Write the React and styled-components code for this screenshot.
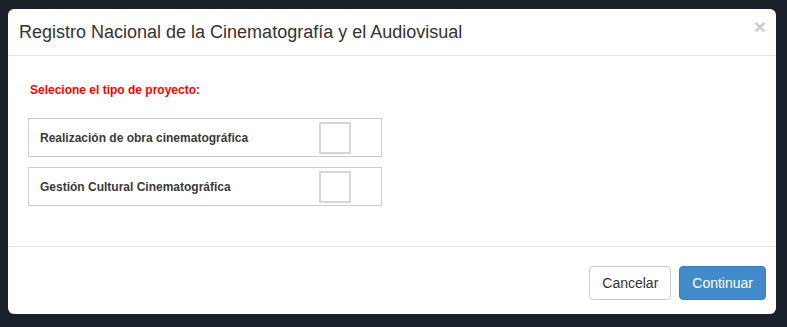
import React from "react";
import styled, { createGlobalStyle } from "styled-components";

const Global = createGlobalStyle`
  html, body { margin: 0; padding: 0; }
  body {
    background: #1a212b;
    font-family: "Liberation Sans", Arial, sans-serif;
    color: #333;
    width: 787px;
    height: 327px;
    overflow: hidden;
  }
`;

const Page = styled.div`
  padding: 9px 11px 0 8px;
`;

const Modal = styled.div`
  width: 768px;
  height: 305px;
  background: #fff;
  border-radius: 6px;
  display: flex;
  flex-direction: column;
  overflow: hidden;
`;

const Header = styled.div`
  display: flex;
  align-items: flex-start;
  justify-content: space-between;
  padding: 10px 10px 10px 11px;
  border-bottom: 1px solid #e5e5e5;
`;

const Title = styled.h4`
  margin: 0;
  font-size: 18px;
  font-weight: normal;
  line-height: 26px;
  color: #333;
`;

const Close = styled.button`
  border: 0;
  background: transparent;
  padding: 0;
  margin: 0;
  font-family: "Liberation Sans", Arial, sans-serif;
  font-size: 21px;
  font-weight: bold;
  line-height: 16px;
  color: #000;
  opacity: 0.2;
  cursor: pointer;
`;

const Body = styled.div`
  flex: 1;
  padding: 27px 20px 0 20px;
`;

const Prompt = styled.p`
  margin: 0 0 20px 2px;
  font-size: 12px;
  font-weight: bold;
  line-height: 15px;
  color: #ff0000;
`;

const Options = styled.div`
  display: flex;
  flex-direction: column;
  gap: 10px;
`;

const Option = styled.label`
  box-sizing: border-box;
  width: 354px;
  height: 39px;
  border: 1px solid #ccc;
  display: flex;
  align-items: center;
  justify-content: space-between;
  padding: 0 30px 0 11px;
  cursor: pointer;
`;

const OptionText = styled.span`
  font-size: 12px;
  font-weight: bold;
  color: #3a3a3a;
`;

const Check = styled.span`
  box-sizing: border-box;
  width: 32px;
  height: 32px;
  border: 2px solid #d3d7dc;
  background: #fff;
  margin-top: 1px;
`;

const Footer = styled.div`
  display: flex;
  justify-content: flex-end;
  gap: 8px;
  padding: 19px 10px 14px;
  border-top: 1px solid #e5e5e5;
`;

const Button = styled.button`
  box-sizing: border-box;
  height: 34px;
  padding: 6px 12px;
  font-family: "Liberation Sans", Arial, sans-serif;
  font-size: 14px;
  line-height: 20px;
  border-radius: 4px;
  border: 1px solid ${(p) => (p.$primary ? "#3a80bd" : "#ccc")};
  background: ${(p) => (p.$primary ? "#428bca" : "#fff")};
  color: ${(p) => (p.$primary ? "#fff" : "#333")};
  cursor: pointer;
`;

export default function App() {
  return (
    <>
      <Global />
      <Page>
        <Modal>
          <Header>
            <Title>Registro Nacional de la Cinematografía y el Audiovisual</Title>
            <Close>×</Close>
          </Header>
          <Body>
            <Prompt>Selecione el tipo de proyecto:</Prompt>
            <Options>
              <Option>
                <OptionText>Realización de obra cinematográfica</OptionText>
                <Check />
              </Option>
              <Option>
                <OptionText>Gestión Cultural Cinematográfica</OptionText>
                <Check />
              </Option>
            </Options>
          </Body>
          <Footer>
            <Button>Cancelar</Button>
            <Button $primary>Continuar</Button>
          </Footer>
        </Modal>
      </Page>
    </>
  );
}
